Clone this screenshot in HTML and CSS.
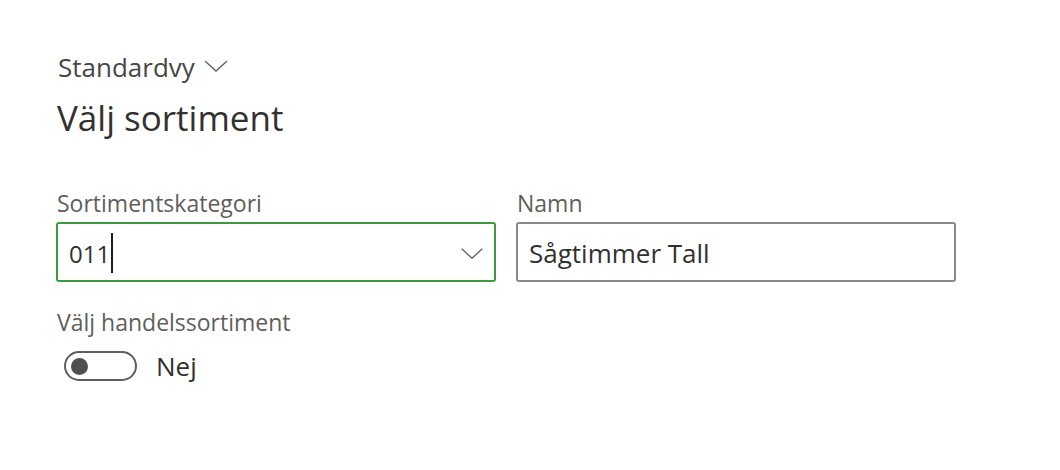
FILE: index.html
```html
<!DOCTYPE html>
<html>

<head>
    <title>Välj sortiment</title>
    <link rel="stylesheet" href="styles.css">
</head>

<body>
    <div class="page">
        <div class="view">
            <span>Standardvy</span>
            <svg class="chev" width="24" height="12" viewBox="0 0 24 12">
                <path d="M1 1 L12 11 L23 1" fill="none" stroke="#605e5c" stroke-width="1.3" />
            </svg>
        </div>
        <h1>Välj sortiment</h1>

        <div class="fields">
            <div class="field">
                <label>Sortimentskategori</label>
                <div class="box focus">
                    <span class="val">011</span><span class="caret"></span>
                    <svg class="drop" width="22" height="11" viewBox="0 0 22 11">
                        <path d="M0.7 0.7 L11 10.3 L21.3 0.7" fill="none" stroke="#605e5c" stroke-width="1.3" />
                    </svg>
                </div>
            </div>
            <div class="field">
                <label>Namn</label>
                <div class="box">
                    <span class="val">Sågtimmer Tall</span>
                </div>
            </div>
        </div>

        <div class="field trade">
            <label>Välj handelssortiment</label>
            <div class="toggle-row">
                <div class="toggle"><div class="knob"></div></div>
                <span>Nej</span>
            </div>
        </div>
    </div>
</body>

</html>
```

FILE: styles.css
```css
body {
    margin: 0;
    background-color: white;
    color: #323130;
    font-family: "Open Sans", "Noto Sans", sans-serif;
}

.page {
    padding: 50px 0 0 58px;
}

.view {
    display: flex;
    align-items: center;
    gap: 9px;
    font-size: 26px;
    line-height: 34px;
    height: 34px;
    color: #484644;
}

.view .chev {
    margin-top: -2px;
}

h1 {
    margin: 12px 0 0 -1px;
    font-size: 35px;
    font-weight: 400;
    line-height: 44px;
    height: 44px;
}

.fields {
    display: flex;
    gap: 20px;
    margin-top: 48px;
    margin-left: -2px;
}

.field {
    display: flex;
    flex-direction: column;
}

.field label {
    font-size: 23px;
    line-height: 30px;
    height: 30px;
    margin-bottom: 4px;
    padding-left: 1px;
    color: #605e5c;
}

.box {
    width: 440px;
    height: 60px;
    box-sizing: border-box;
    border: 2px solid #8a8886;
    border-radius: 3px;
    display: flex;
    align-items: center;
    padding: 2px 0 0 11px;
    font-size: 26px;
}

.box.focus {
    border-color: #3c9b3c;
}

.focus .val {
    font-size: 24px;
}

.caret {
    width: 2px;
    height: 40px;
    background: #201f1e;
    margin-left: 1px;
}

.drop {
    margin-left: auto;
    margin-right: 11px;
}

.trade {
    margin-top: 25px;
    margin-left: -2px;
}

.trade label {
    margin-bottom: 11px;
}

.toggle-row {
    display: flex;
    align-items: center;
    gap: 19px;
    margin-left: 8px;
    font-size: 26px;
}

.toggle {
    width: 73px;
    height: 30px;
    box-sizing: border-box;
    border: 2px solid #605e5c;
    border-radius: 15px;
    display: flex;
    align-items: center;
    padding-left: 5px;
}

.knob {
    width: 17px;
    height: 17px;
    border-radius: 50%;
    background: #505050;
}
```
